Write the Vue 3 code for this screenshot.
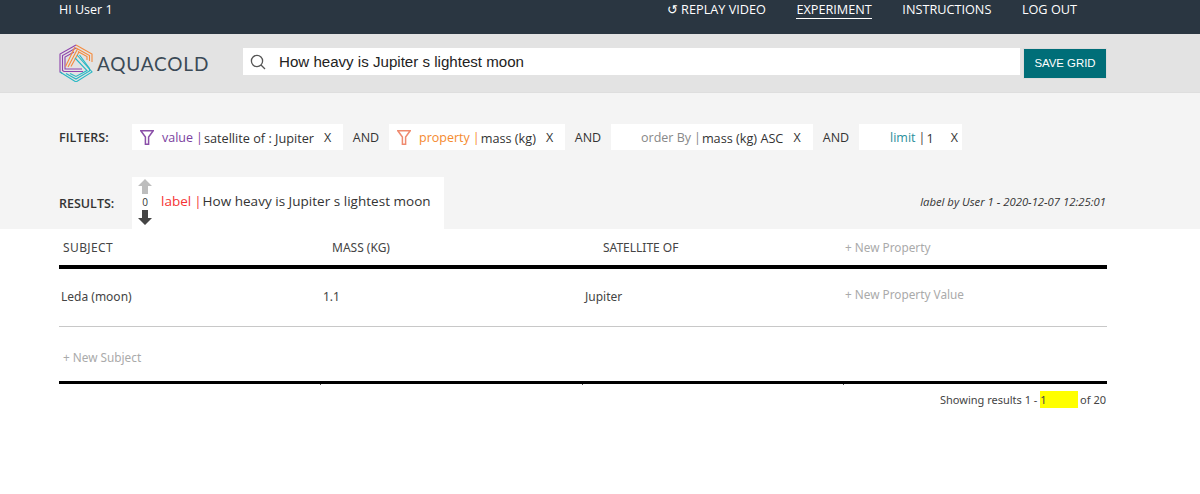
<template>
  <div class="page">
    <header class="topbar">
      <div class="greeting">HI User 1</div>
      <nav class="nav">
        <a class="nav-link replay">↺ REPLAY VIDEO</a>
        <a class="nav-link active">EXPERIMENT</a>
        <a class="nav-link">INSTRUCTIONS</a>
        <a class="nav-link">LOG OUT</a>
      </nav>
    </header>

    <div class="searchbar">
      <div class="logo">
        <svg width="38" height="38" viewBox="0 0 38 38" fill="none" stroke-width="1.1">
          <g stroke="#8e44ad">
            <path d="M17 1 L1 10 V28 L3 29.2" />
            <path d="M17 4 L3.5 11.5 V26.5 L5 27.5 H24" />
            <path d="M15 8 L6 13 V25 H23" />
          </g>
          <g stroke="#f58a3c">
            <path d="M17 1 L33 10 V18" />
            <path d="M17 4 L30.5 11.5 V17" />
            <path d="M19 7.5 L28 12.5 V16" />
            <path d="M16 3 L6.5 22.5" />
            <path d="M18.5 5 L9 23" />
            <path d="M20 8 L12 22.5" />
          </g>
          <g stroke="#26b8c4">
            <path d="M18 11 L33 28 L17 38 L1 28" />
            <path d="M20.5 11 L30.5 24.5 V27 L17 35 L7 29.5" />
            <path d="M16 14 L28 26.5 L17 32.5 L11 29.5" />
          </g>
        </svg>
        <span class="logo-text">AQUACOLD</span>
      </div>
      <div class="search">
        <svg class="search-icon" width="16" height="16" viewBox="0 0 16 16" fill="none" stroke="#555" stroke-width="1.3">
          <circle cx="7" cy="7" r="5.6" />
          <path d="M11 11 L15 15" />
        </svg>
        <span class="search-text">How heavy is Jupiter s lightest moon</span>
      </div>
      <button class="save-btn">SAVE GRID</button>
    </div>

    <section class="panel">
      <div class="filter-row">
        <div class="row-label">FILTERS:</div>
        <template v-for="(f, i) in filters" :key="f.name">
          <div class="and" v-if="i > 0">AND</div>
          <div class="chip" :class="f.cls">
            <svg v-if="f.icon" class="funnel" width="14" height="15" viewBox="0 0 14 15" fill="none" :stroke="f.icon" stroke-width="1.5">
              <path d="M0.8 0.8 H13.2 L8.6 7 V14.2 H5.4 V7 Z" />
            </svg>
            <span class="chip-name" :style="{ color: f.color }">{{ f.name }}</span>
            <span class="pipe" :style="{ color: f.pipe || f.color }">|</span>
            <span class="chip-val">{{ f.value }}</span>
            <span class="chip-x">X</span>
          </div>
        </template>
      </div>
      <div class="result-row">
        <div class="row-label">RESULTS:</div>
        <div class="result-card">
          <div class="votes">
            <svg width="14" height="15" viewBox="0 0 14 15"><path d="M7 0 L14 7 H10 V15 H4 V7 H0 Z" fill="#bdbdbd" /></svg>
            <span class="vote-num">0</span>
            <svg width="14" height="15" viewBox="0 0 14 15"><path d="M7 15 L14 8 H10 V0 H4 V8 H0 Z" fill="#444" /></svg>
          </div>
          <span class="label-name">label</span>
          <span class="label-pipe">|</span>
          <span class="label-val">How heavy is Jupiter s lightest moon</span>
        </div>
        <div class="label-by">label by User 1 - 2020-12-07 12:25:01</div>
      </div>
    </section>

    <section class="grid-wrap">
      <div class="grid-row head">
        <div class="cell"><span class="h1">SUBJECT</span></div>
        <div class="cell"><span class="h2">MASS (KG)</span></div>
        <div class="cell"><span class="h3">SATELLITE OF</span></div>
        <div class="cell muted">+ New Property</div>
      </div>
      <div class="grid-row body">
        <div class="cell">Leda (moon)</div>
        <div class="cell">1.1</div>
        <div class="cell">Jupiter</div>
        <div class="cell muted up">+ New Property Value</div>
      </div>
      <div class="new-subject muted">+ New Subject</div>
      <div class="ticks">
        <span></span>
        <span></span>
        <span></span>
      </div>
      <div class="pager">
        Showing results 1 - <span class="page-input">1</span> of 20
      </div>
    </section>
  </div>
</template>

<script setup>
const filters = [
  { name: 'value', value: 'satellite of : Jupiter', color: '#7b3fa0', icon: '#8a4fa8', cls: 'c1' },
  { name: 'property', value: 'mass (kg)', color: '#f58a2e', icon: '#ef8a6f', cls: 'c2' },
  { name: 'order By', value: 'mass (kg) ASC', color: '#888', cls: 'c3' },
  { name: 'limit', value: '1', color: '#2a8f9c', pipe: '#444', cls: 'c4' }
]
</script>

<style>
body {
  margin: 0;
  background: #fff;
}
</style>

<style scoped>
.page {
  width: 1200px;
  height: 494px;
  overflow: hidden;
  font-family: "Open Sans", "Noto Sans", sans-serif;
  color: #333;
  background: #fff;
}

.topbar {
  height: 34px;
  background: #2a3641;
  color: #fff;
  display: flex;
  justify-content: space-between;
  padding: 0 123px 0 59px;
  font-size: 12.7px;
  line-height: 19px;
}

.greeting {
  font-size: 12.5px;
}

.nav {
  display: flex;
  gap: 30.5px;
}

.nav-link {
  height: 18px;
}

.nav-link.active {
  border-bottom: 1px solid #fff;
}

.searchbar {
  height: 59px;
  background: #e3e3e3;
  border-bottom: 1px solid #dedede;
  display: flex;
  align-items: flex-start;
  padding: 14px 93px 0 59px;
  box-sizing: border-box;
}

.logo {
  width: 184px;
  margin-top: -4px;
  display: flex;
  align-items: center;
}

.logo-text {
  font-family: Lato, "Open Sans", sans-serif;
  font-size: 19px;
  letter-spacing: 0.8px;
  color: #3b4a56;
}

.search {
  width: 777px;
  height: 27px;
  background: #fff;
  display: flex;
  align-items: center;
  box-sizing: border-box;
  padding-left: 7px;
}

.search-text {
  font-family: "Liberation Sans", Arial, sans-serif;
  font-size: 15.1px;
  color: #222;
  margin-left: 13px;
}

.save-btn {
  margin-left: 3px;
  width: 84px;
  height: 31px;
  border: 1px solid #dcdcdc;
  background: #006e78;
  color: #fff;
  font-family: "Liberation Sans", Arial, sans-serif;
  font-size: 11.4px;
  padding: 0 0 2px;
}

.panel {
  height: 136px;
  background: #f4f4f4;
  padding: 31px 94px 0 59px;
  box-sizing: border-box;
  font-size: 12.5px;
}

.filter-row {
  display: flex;
  align-items: center;
  height: 26px;
}

.row-label {
  width: 73px;
  font-weight: 600;
  font-size: 12.5px;
  color: #333;
  padding-top: 1px;
}

.chip {
  height: 26px;
  background: #fff;
  display: flex;
  align-items: center;
  box-sizing: border-box;
  padding-top: 1px;
  white-space: nowrap;
}

.c1 { width: 211px; padding-left: 8px; }
.c2 { width: 176px; padding-left: 8px; }
.c3 { width: 202px; padding-left: 30px; }
.c4 { width: 103px; padding-left: 31px; }

.funnel {
  margin-right: 8px;
  margin-top: -1px;
  flex: none;
}

.pipe {
  margin: 0 1px 0 3px;
}

.chip-val {
  font-size: 12.7px;
}

.chip-x {
  margin-left: 10px;
}

.c4 .chip-x {
  margin-left: 17px;
}

.and {
  width: 46px;
  text-align: center;
  padding-top: 1px;
}

.result-row {
  display: flex;
  align-items: flex-end;
  margin-top: 26px;
  height: 53px;
  position: relative;
}

.result-row .row-label {
  align-self: center;
  padding-top: 2px;
}

.result-card {
  width: 312px;
  height: 52px;
  background: #fff;
  display: flex;
  align-items: center;
  box-sizing: border-box;
  padding: 0 0 4px 6px;
  font-size: 13.5px;
  white-space: nowrap;
}

.votes {
  width: 14px;
  margin: 2px 9px 0 0;
  display: flex;
  flex-direction: column;
  align-items: center;
  font-size: 10px;
  line-height: 16px;
}

.votes svg {
  display: block;
}

.label-name,
.label-pipe {
  color: #f53333;
}

.label-pipe {
  margin: 0 3px;
}

.label-val {
  margin-left: -2px;
  letter-spacing: 0.02px;
}

.label-by {
  margin-left: auto;
  align-self: center;
  margin-bottom: 2px;
  font-size: 11.3px;
  font-style: italic;
  color: #333;
}

.grid-wrap {
  padding: 0 93px 0 59px;
  font-family: "Noto Sans", "Open Sans", sans-serif;
  font-size: 12px;
  color: #444;
}

.grid-row {
  display: grid;
  grid-template-columns: 262px 262px 260px 1fr;
}

.head {
  height: 36px;
  border-bottom: 4px solid #000;
  align-items: center;
}

.h1 { margin-left: 4px; letter-spacing: 0.4px; }
.h2 { margin-left: 11px; }
.h3 { margin-left: 20px; }

.head .muted {
  padding-left: 2px;
}

.body {
  height: 58px;
  padding-bottom: 3px;
  box-sizing: border-box;
  border-bottom: 1px solid #c8c8c8;
  align-items: center;
}

.body .cell {
  padding-left: 2px;
}

.muted {
  color: #aaa;
  font-size: 11.8px;
}

.up {
  margin-top: -4px;
}

.new-subject {
  height: 54px;
  line-height: 60px;
  padding-left: 4px;
  border-bottom: 3px solid #000;
  box-sizing: content-box;
}

.ticks {
  display: grid;
  grid-template-columns: 262px 262px 261px;
  height: 1px;
}

.ticks span {
  border-right: 1px solid #555;
  height: 1px;
}

.pager {
  text-align: right;
  font-size: 11px;
  line-height: 17px;
  margin-top: 6px;
  padding-right: 1px;
}

.page-input {
  display: inline-block;
  width: 38px;
  background: #ff0;
  text-align: left;
  margin-right: -1px;
}
</style>
